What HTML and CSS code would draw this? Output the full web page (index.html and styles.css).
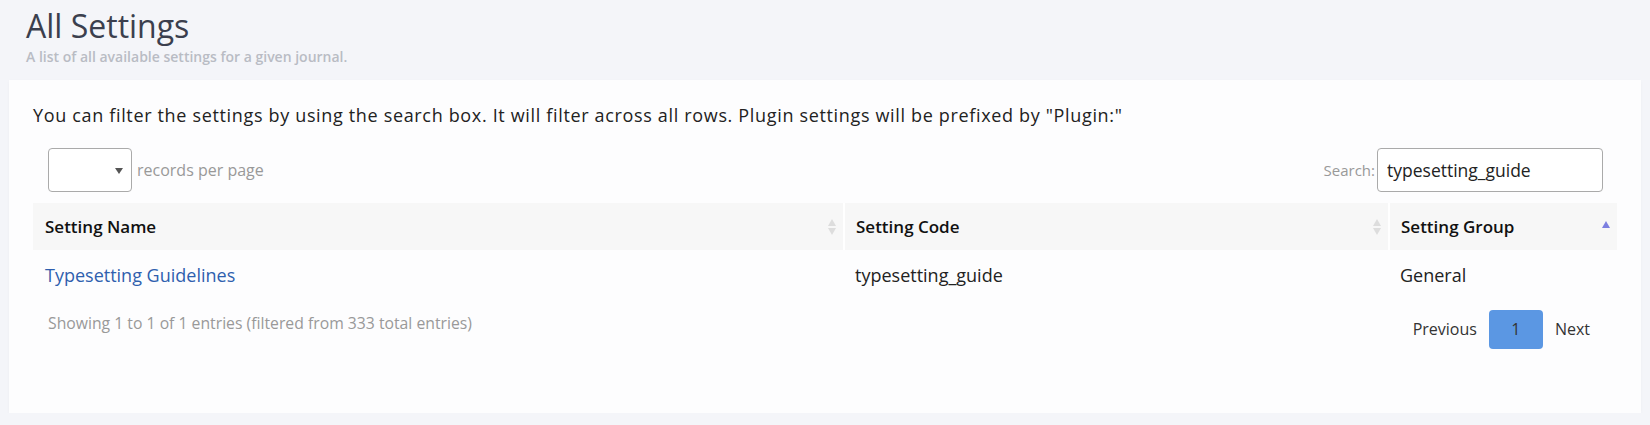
FILE: index.html
```html
<!DOCTYPE html>
<html lang="en">
<head>
  <meta charset="UTF-8" />
  <title>All Settings</title>
  <link rel="stylesheet" href="styles.css">
</head>
<body>
  <header class="page-head">
    <h1 class="page-title">All Settings</h1>
    <div class="page-sub">A list of all available settings for a given journal.</div>
  </header>

  <main class="card">
    <p class="intro">You can filter the settings by using the search box. It will filter across all rows. Plugin settings will be prefixed by "Plugin:"</p>

    <div class="dt-top">
      <label class="dt-length">
        <span class="select"><span class="select-arrow"></span></span>
        records per page
      </label>
      <label class="dt-filter">
        Search:<input type="text" class="search-input" value="typesetting_guide">
      </label>
    </div>

    <table class="settings">
      <thead>
        <tr>
          <th class="col-name">Setting Name <span class="sort sort-both"></span></th>
          <th class="col-code">Setting Code <span class="sort sort-both"></span></th>
          <th class="col-group">Setting Group <span class="sort sort-asc"></span></th>
        </tr>
      </thead>
      <tbody>
        <tr>
          <td><a href="#">Typesetting Guidelines</a></td>
          <td>typesetting_guide</td>
          <td>General</td>
        </tr>
      </tbody>
    </table>

    <div class="dt-bottom">
      <div class="dt-info">Showing 1 to 1 of 1 entries (filtered from 333 total entries)</div>
      <div class="dt-paginate">
        <a class="page-btn">Previous</a>
        <a class="page-btn current">1</a>
        <a class="page-btn">Next</a>
      </div>
    </div>
  </main>
</body>
</html>
```

FILE: styles.css
```css
body {
  margin: 0;
  background-color: #f4f5f9;
  font-family: 'Open Sans', 'Noto Sans', sans-serif;
  color: #222;
}
.page-head {
  padding: 4px 26px 0;
}
.page-title {
  margin: 0;
  font-size: 32px;
  font-weight: 400;
  color: #3b3f4e;
}
.page-sub {
  margin-top: 0;
  font-size: 14px;
  font-weight: 600;
  color: #b9bcc4;
}
.card {
  display: block;
  margin: 14px 9px 0;
  height: 333px;
  box-sizing: border-box;
  padding: 23px 24px;
  background: #fdfdfe;
  box-shadow: 0 1px 3px rgba(0, 0, 0, 0.03);
}
.intro {
  margin: 0;
  font-size: 18px;
  letter-spacing: 0.66px;
}

/* table controls */
.dt-top {
  display: flex;
  justify-content: space-between;
  align-items: center;
  margin-top: 21px;
  padding: 0 14px 0 15px;
}
.dt-length, .dt-filter {
  display: flex;
  align-items: center;
  font-size: 16px;
  color: #999;
}
.dt-filter {
  font-size: 15px;
}
.select {
  position: relative;
  width: 84px;
  height: 44px;
  box-sizing: border-box;
  border: 1px solid #aaa;
  border-radius: 4px;
  margin-right: 5px;
  background: #fff;
}
.select-arrow {
  position: absolute;
  right: 8px;
  top: 19px;
  border-left: 4px solid transparent;
  border-right: 4px solid transparent;
  border-top: 6px solid #555;
}
.search-input {
  width: 226px;
  height: 44px;
  box-sizing: border-box;
  margin-left: 2px;
  padding: 0 9px;
  border: 1px solid #aaa;
  border-radius: 4px;
  font-family: inherit;
  font-size: 17.5px;
  color: #222;
}

/* table */
.settings {
  width: 100%;
  margin-top: 11px;
  border-collapse: collapse;
  table-layout: fixed;
}
.settings th {
  position: relative;
  box-sizing: border-box;
  height: 47px;
  padding: 0 12px;
  background: #f7f7f7;
  text-align: left;
  font-size: 17px;
  font-weight: 600;
  color: #111;
}
.settings th + th {
  border-left: 2px solid #fff;
}
.col-name { width: 811px; }
.col-code { width: 545px; }
.settings td {
  height: 50px;
  padding: 0 12px;
  font-size: 18px;
  color: #222;
}
.settings th + th, .settings td + td {
  padding-left: 11px;
}
.settings a {
  color: #2f5fae;
  text-decoration: none;
}
.sort {
  position: absolute;
  right: 7px;
  top: 15px;
  width: 8px;
  height: 18px;
}
.sort::before, .sort::after {
  content: "";
  position: absolute;
  left: 0;
  border-left: 4px solid transparent;
  border-right: 4px solid transparent;
}
.sort-both::before {
  top: 1px;
  border-bottom: 7px solid #ddd;
}
.sort-both::after {
  top: 10px;
  border-top: 7px solid #ddd;
}
.sort-asc::before {
  top: 3px;
  border-bottom: 7px solid #7c7fe0;
}

/* footer */
.dt-bottom {
  display: flex;
  justify-content: space-between;
  align-items: flex-start;
  margin-top: 10px;
  padding: 0 15px;
}
.dt-info {
  padding-top: 2px;
  font-size: 15.75px;
  color: #999;
}
.dt-paginate {
  display: flex;
  align-items: center;
}
.page-btn {
  padding: 0 12px;
  line-height: 39px;
  font-size: 16px;
  color: #333;
  border-radius: 4px;
}
.page-btn.current {
  width: 54px;
  box-sizing: border-box;
  text-align: center;
  background: #5b97e3;
}
```
